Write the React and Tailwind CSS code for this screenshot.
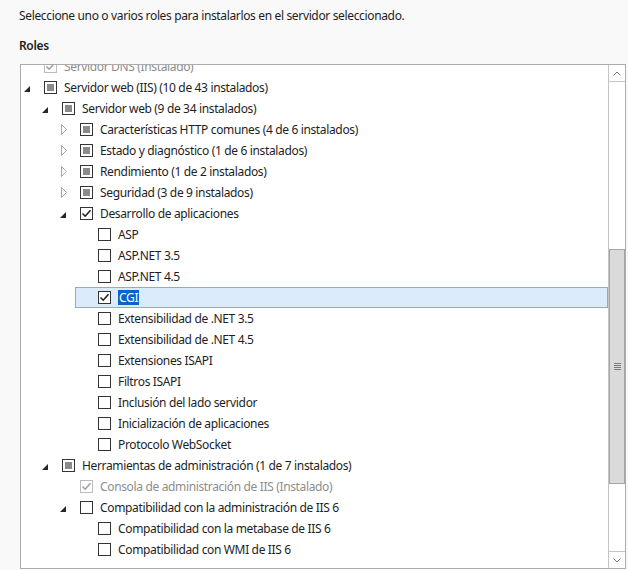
import React from 'react';

const rows = [
  { level: 0, arrow: null, state: 'disabled', label: 'Servidor DNS (Instalado)' },
  { level: 0, arrow: 'open', state: 'partial', label: 'Servidor web (IIS) (10 de 43 instalados)' },
  { level: 1, arrow: 'open', state: 'partial', label: 'Servidor web (9 de 34 instalados)' },
  { level: 2, arrow: 'closed', state: 'partial', label: 'Características HTTP comunes (4 de 6 instalados)' },
  { level: 2, arrow: 'closed', state: 'partial', label: 'Estado y diagnóstico (1 de 6 instalados)' },
  { level: 2, arrow: 'closed', state: 'partial', label: 'Rendimiento (1 de 2 instalados)' },
  { level: 2, arrow: 'closed', state: 'partial', label: 'Seguridad (3 de 9 instalados)' },
  { level: 2, arrow: 'open', state: 'checked', label: 'Desarrollo de aplicaciones' },
  { level: 3, arrow: null, state: 'off', label: 'ASP' },
  { level: 3, arrow: null, state: 'off', label: 'ASP.NET 3.5' },
  { level: 3, arrow: null, state: 'off', label: 'ASP.NET 4.5' },
  { level: 3, arrow: null, state: 'checked', label: 'CGI', selected: true },
  { level: 3, arrow: null, state: 'off', label: 'Extensibilidad de .NET 3.5' },
  { level: 3, arrow: null, state: 'off', label: 'Extensibilidad de .NET 4.5' },
  { level: 3, arrow: null, state: 'off', label: 'Extensiones ISAPI' },
  { level: 3, arrow: null, state: 'off', label: 'Filtros ISAPI' },
  { level: 3, arrow: null, state: 'off', label: 'Inclusión del lado servidor' },
  { level: 3, arrow: null, state: 'off', label: 'Inicialización de aplicaciones' },
  { level: 3, arrow: null, state: 'off', label: 'Protocolo WebSocket' },
  { level: 1, arrow: 'open', state: 'partial', label: 'Herramientas de administración (1 de 7 instalados)' },
  { level: 2, arrow: null, state: 'disabled', label: 'Consola de administración de IIS (Instalado)' },
  { level: 2, arrow: 'open', state: 'off', label: 'Compatibilidad con la administración de IIS 6' },
  { level: 3, arrow: null, state: 'off', label: 'Compatibilidad con la metabase de IIS 6' },
  { level: 3, arrow: null, state: 'off', label: 'Compatibilidad con WMI de IIS 6' },
];

const indents = ['pl-0', 'pl-[18px]', 'pl-[36px]', 'pl-[54px]'];

function Arrow({ kind }) {
  if (kind === 'open') {
    return (
      <svg width="6" height="6" viewBox="0 0 6 6" className="mt-[3px] ml-[2px]">
        <polygon points="6,0 6,6 0,6" fill="#262626" />
      </svg>
    );
  }
  if (kind === 'closed') {
    return (
      <svg width="7" height="11" viewBox="0 0 7 11" className="ml-[3px]">
        <polygon points="0.5,0.5 5.5,5.5 0.5,10.5" fill="none" stroke="#a6a6a6" />
      </svg>
    );
  }
  return null;
}

function Check({ state }) {
  const disabled = state === 'disabled';
  return (
    <span
      className={`w-[13px] h-[13px] shrink-0 border flex items-center justify-center bg-white ${
        disabled ? 'border-[#bcbcbc]' : 'border-[#333333]'
      }`}
    >
      {state === 'partial' && <span className="w-[7px] h-[7px] bg-[#8a8a8a]" />}
      {(state === 'checked' || disabled) && (
        <svg width="11" height="11" viewBox="0 0 11 11">
          <path
            d="M1.5 5.5 L4.2 8.2 L9.5 2.2"
            fill="none"
            stroke={disabled ? '#a0a0a0' : '#222222'}
            strokeWidth="1.6"
          />
        </svg>
      )}
    </span>
  );
}

function Row({ row }) {
  return (
    <div className={`h-[21px] flex ${indents[row.level]}`}>
      <div
        className={`flex-1 flex items-center border ${
          row.selected ? 'bg-[#dcebfc] border-[#84acdd]' : 'border-transparent'
        }`}
      >
        <span className="w-[22px] shrink-0 flex items-center">
          <Arrow kind={row.arrow} />
        </span>
        <Check state={row.state} />
        <span
          className={`ml-[7px] whitespace-nowrap leading-[15px] ${
            row.selected ? 'bg-[#0a64c8] text-white px-px -ml-px' : ''
          } ${row.state === 'disabled' ? 'text-[#8d8d8d]' : 'text-[#1e1e1e]'}`}
        >
          {row.label}
        </span>
      </div>
    </div>
  );
}

function ScrollBar() {
  return (
    <div className="w-[17px] shrink-0 border-l border-[#c4c4c4] flex flex-col bg-white">
      <div className="h-[17px] border-b border-[#c4c4c4] flex items-center justify-center">
        <svg width="8" height="5" viewBox="0 0 8 5">
          <path d="M0.5 4.5 L4 1 L7.5 4.5" fill="none" stroke="#7a7a7a" />
        </svg>
      </div>
      <div className="flex-1 pt-[167px]">
        <div className="h-[235px] bg-[#dadada] border border-[#a5a5a5] flex flex-col items-center justify-center gap-px">
          <span className="w-[7px] h-px bg-[#7a7a7a]" />
          <span className="w-[7px] h-px bg-[#7a7a7a]" />
          <span className="w-[7px] h-px bg-[#7a7a7a]" />
          <span className="w-[7px] h-px bg-[#7a7a7a]" />
        </div>
      </div>
      <div className="h-[17px] border-t border-[#c4c4c4] flex items-center justify-center">
        <svg width="8" height="5" viewBox="0 0 8 5">
          <path d="M0.5 0.5 L4 4 L7.5 0.5" fill="none" stroke="#7a7a7a" />
        </svg>
      </div>
    </div>
  );
}

export default function App() {
  return (
    <div
      className="w-[628px] h-[570px] bg-[#f9f9f9] overflow-hidden text-[12px] tracking-[-0.35px] text-[#1e1e1e]"
      style={{ fontFamily: '"Noto Sans", "Open Sans", sans-serif' }}
    >
      <p className="pt-[8px] pl-[19px] leading-[16px]">
        Seleccione uno o varios roles para instalarlos en el servidor seleccionado.
      </p>
      <p className="mt-[14px] pl-[19px] leading-[16px] font-semibold">Roles</p>
      <div className="mt-[10px] ml-[20px] w-[606px] h-[505px] border border-[#acacac] bg-white flex">
        <div className="flex-1 overflow-hidden">
          <div className="-mt-[9px]">
            {rows.map((row, i) => (
              <Row key={i} row={row} />
            ))}
          </div>
        </div>
        <ScrollBar />
      </div>
    </div>
  );
}
